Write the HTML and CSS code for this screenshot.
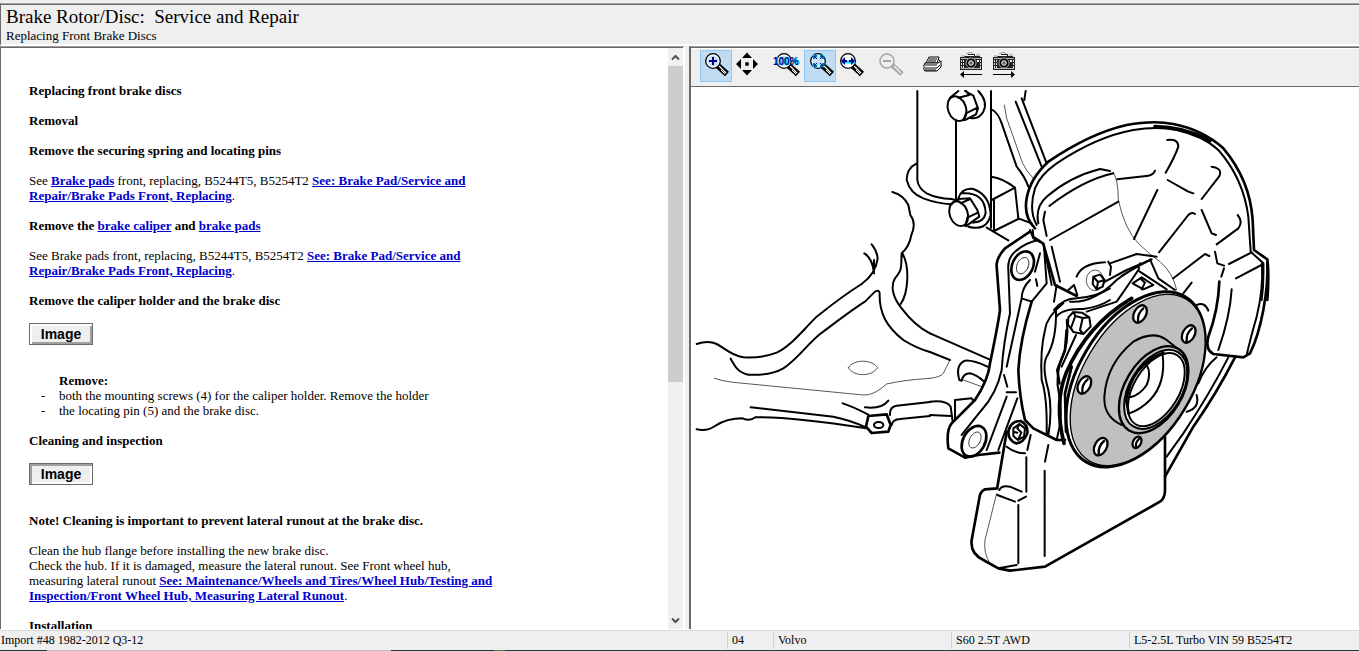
FILE: index.html
```html
<!DOCTYPE html>
<html lang="en">
<head>
<meta charset="utf-8">
<title>Brake Rotor/Disc: Service and Repair</title>
<link rel="stylesheet" href="styles.css">
</head>
<body>
<div class="app">
  <header class="header">
    <h1 class="title">Brake Rotor/Disc:  Service and Repair</h1>
    <p class="subtitle">Replacing Front Brake Discs</p>
  </header>
  <main class="panes">
    <section class="doc-pane">
      <article class="doc">
        <h2>Replacing front brake discs</h2>
        <h2>Removal</h2>
        <h2>Remove the securing spring and locating pins</h2>
        <p>See <a href="#">Brake pads</a> front, replacing, B5244T5, B5254T2 <a href="#">See: Brake Pad/Service and Repair/Brake Pads Front, Replacing</a>.</p>
        <h2>Remove the <a href="#">brake caliper</a> and <a href="#">brake pads</a></h2>
        <p>See Brake pads front, replacing, B5244T5, B5254T2 <a href="#">See: Brake Pad/Service and Repair/Brake Pads Front, Replacing</a>.</p>
        <h2>Remove the caliper holder and the brake disc</h2>
        <button class="image-button" type="button">Image</button>
        <div class="steps">
          <h3>Remove:</h3>
          <ul>
            <li>both the mounting screws (4) for the caliper holder. Remove the holder</li>
            <li>the locating pin (5) and the brake disc.</li>
          </ul>
        </div>
        <h2>Cleaning and inspection</h2>
        <button class="image-button pressed" type="button">Image</button>
        <h2>Note! Cleaning is important to prevent lateral runout at the brake disc.</h2>
        <p>Clean the hub flange before installing the new brake disc.<br>Check the hub. If it is damaged, measure the lateral runout. See Front wheel hub, measuring lateral runout <a href="#">See: Maintenance/Wheels and Tires/Wheel Hub/Testing and Inspection/Front Wheel Hub, Measuring Lateral Runout</a>.</p>
        <h2>Installation</h2>
      </article>
      <div class="scrollbar">
        <button class="scroll-button" type="button" aria-label="Scroll up"><svg width="9" height="7" viewBox="0 0 9 7"><path d="M1 5.500 4.500 2 8 5.500"/></svg></button>
        <div class="track"><div class="thumb"></div></div>
        <button class="scroll-button" type="button" aria-label="Scroll down"><svg width="9" height="7" viewBox="0 0 9 7"><path d="M1 1.500 4.500 5 8 1.500"/></svg></button>
      </div>
    </section>
    <section class="image-pane">
      <svg class="defs" width="0" height="0" aria-hidden="true">
        <symbol id="lens" viewBox="0 0 32 32">
          <path d="M17 15 27 24" stroke="#000" stroke-width="6"/>
          <path d="M19 16 26 23" stroke="#fff" stroke-width="1.200"/>
          <path d="M21 20 25 24" stroke="#fff" stroke-width="1"/>
          <circle cx="13" cy="11" r="7.300" fill="#fff" stroke="#000" stroke-width="1.300"/>
          <circle cx="13" cy="11" r="5.600" fill="#c6e2f4"/>
        </symbol>
        <symbol id="camera" viewBox="0 0 32 32">
          <path d="M4 7H8V6H12V4H19V6H24V7H26V20H4Z" fill="#222"/>
          <path d="M5 6H9M20 5H24M10 4 15 2 17 4" stroke="#999" stroke-width="1" fill="none"/>
          <path d="M5 8.500H25M5 18.500H25" stroke="#b5b5b5" stroke-width="1"/>
          <path d="M5.500 10V18M7.500 10V18M24.500 10V18" stroke="#ddd" stroke-width="1" stroke-dasharray="2 1"/>
          <circle cx="15" cy="13" r="5" fill="#000" stroke="#aaa" stroke-width="1"/>
          <circle cx="15" cy="13" r="2.300" fill="#666" stroke="#fff" stroke-width="1"/>
          <path d="M12 5.500H18" stroke="#fff" stroke-width="1"/>
          <path d="M21 10H23V12H21Z" fill="#fff"/>
        </symbol>
      </svg>
      <div class="toolbar">
        <button class="tool active" type="button" aria-label="Zoom in"><svg viewBox="0 0 32 32"><use href="#lens"/><path d="M9 11H17M13 7V15" stroke="#00008b" stroke-width="2"/></svg></button>
        <button class="tool" type="button" aria-label="Pan"><svg viewBox="0 0 32 32"><path d="M11 7H19L22 10V18L19 21H11L8 18V10Z" fill="#fff"/><path d="M11 8H19L21 10V18L19 20H11L9 18V10Z" fill="#efefef"/><path d="M15 2.500 20 8H10ZM15 25.500 10 20H20ZM4 14 9 9V19ZM26 14 21 19V9Z"/><circle cx="15" cy="14" r="2"/></svg></button>
        <button class="tool group" type="button" aria-label="Zoom to 100%"><svg viewBox="0 0 32 32"><use href="#lens" x="-1"/><text class="full cyan" x="2" y="15">100%</text><text class="full" x="1" y="15">100%</text></svg></button>
        <button class="tool active" type="button" aria-label="Fit window"><svg viewBox="0 0 32 32"><use href="#lens" x="1"/><path d="M10 9V6H13M16 6H19V9M19 13V16H16M13 16H10V13" fill="none" stroke="#00e5ff" stroke-width="2.600"/><path d="M10 9V6H13M10 6 13 9M16 6H19V9M19 6 16 9M19 13V16H16M19 16 16 13M13 16H10V13M10 16 13 13" fill="none" stroke="#00008b"/></svg></button>
        <button class="tool" type="button" aria-label="Fit width"><svg viewBox="0 0 32 32"><use href="#lens" x="-1"/><circle cx="12" cy="11" r="5.600" fill="#fff"/><path d="M6 12H19" stroke="#00e5ff" stroke-width="3"/><path d="M5 11 9 7V10H11V12H9V15ZM19 11 15 7V10H13V12H15V15Z" fill="#00008b"/></svg></button>
        <button class="tool group" type="button" aria-label="Zoom out" disabled><svg viewBox="0 0 32 32"><g stroke="#a5a5a5" fill="none"><path d="M16 15 26 24" stroke-width="5"/><circle cx="11" cy="11" r="7" fill="#efefef" stroke-width="1.500"/><path d="M7 11H15" stroke-width="2"/></g><path d="M18 16 25 23" stroke="#eee" stroke-width="1.500"/></svg></button>
        <button class="tool group" type="button" aria-label="Print"><svg viewBox="0 0 32 32"><path d="M13 7H23L21 13H10Z" fill="#fff" stroke="#000"/><path d="M13 9H21M12 11H20" stroke="#000"/><path d="M9 13H22L25 11V17L21 21H9L8 20V15Z" fill="#fff" stroke="#000"/><path d="M9 15H21M9 18H21L24 15M9 20H20M22 9 24 11" stroke="#000" fill="none"/></svg></button>
        <button class="tool group" type="button" aria-label="Previous image"><svg viewBox="0 0 32 32"><use href="#camera"/><path d="M26 24H8V21L4 24.500 8 28V25H26Z"/></svg></button>
        <button class="tool" type="button" aria-label="Next image"><svg viewBox="0 0 32 32"><use href="#camera" x="1"/><path d="M5 24H23V21L27 24.500 23 28V25H5Z"/></svg></button>
      </div>
      <div class="viewer">
        <svg class="drawing" viewBox="691 87 668 541" preserveAspectRatio="xMinYMin meet" role="img" aria-label="Front hub, brake disc shield and suspension">
          <!-- Subframe and control arm -->
          <g transform="translate(690 180) scale(.33333)">
            <path d="M20 492Q55 480 80 492C110 508 120 525 160 532C200 534 230 530 260 518C300 500 330 460 380 410C430 370 470 340 515 312C545 290 560 260 563 235Q560 210 545 193M523 220Q548 235 552 280M552 240V275M122 536C135 560 145 578 175 584C215 586 250 582 280 565C320 540 350 495 390 462C440 425 485 390 525 365Q545 345 555 335Q568 328 569 340C567 400 590 440 640 480Q680 505 720 516M607 36Q640 45 655 75L661 105Q680 130 664 165Q658 200 635 220C632 260 640 265 615 295C600 320 610 355 635 385C665 425 690 445 720 460M637 220C660 260 655 340 632 372M182 682 430 710Q480 720 528 742M20 748Q50 755 75 738Q110 715 158 715Q180 725 196 712Q300 710 528 745M458 670Q490 680 535 704M525 682Q575 688 595 662M600 705Q598 680 620 677L720 666M605 735Q608 718 630 717L720 708"/>
            <path class="bold" d="M535 708 590 703 602 735 595 755 545 759 528 740Z"/>
            <ellipse cx="566" cy="735" rx="14" ry="9"/>
            <path class="thin" d="M73 595Q95 603 130 607L520 645Q550 648 590 612Q640 600 720 595M475 563C490 537 546 537 563 563C546 591 490 591 475 563"/>
          </g>
          <!-- Spring strut and its bolts -->
          <g transform="translate(890 85) scale(.33333)">
            <path d="M82 18V285Q85 310 110 325Q140 340 185 342L205 348M80 235Q50 250 50 285Q60 325 100 340Q140 355 185 358M198 105V340M303 18V345M303 345V428M303 275Q340 280 375 308L385 400 425 415M305 345 375 308M312 345V438L385 402M290 428 355 466M308 75Q325 85 335 115L380 245Q405 275 415 305M377 50 455 245M395 40 470 235M407 18 403 45"/>
            <path d="M265 18Q295 50 280 80Q265 105 240 98M180 38 205 18M225 18 250 32 264 70 258 88 225 105M205 38 238 30M228 85 262 68M228 85 220 106M238 30 228 18"/>
            <ellipse cx="201" cy="71" rx="27" ry="38" transform="rotate(-20 201 71)"/>
            <path d="M205 340Q215 308 250 312Q300 330 302 390Q290 440 235 425M215 325Q285 320 287 385Q280 415 245 412M190 352 205 342 240 340 262 375 268 395 230 422M212 355 240 342M232 398 265 382M232 398 226 424"/>
            <ellipse cx="206" cy="386" rx="27" ry="38" transform="rotate(-20 206 386)"/>
            <path class="thin" d="M343 60 350 100 398 235Q410 260 430 280"/>
          </g>
          <!-- Upper dust shield -->
          <g transform="translate(1010 100) scale(.33333)">
            <path class="bold" d="M75 385Q40 350 50 295Q60 235 115 185Q240 100 350 75Q430 60 490 72Q580 90 640 145Q720 240 728 360L732 450 772 478Q778 520 772 600"/>
            <path d="M80 375Q55 330 75 265Q90 225 140 190Q260 110 370 90Q440 78 500 90Q580 108 625 150Q700 235 715 350L722 455 760 490Q762 550 755 600"/>
            <path class="heavy" d="M435 80Q520 80 600 122"/>
            <path d="M85 370Q75 320 110 290Q180 230 270 207L300 213M118 318Q220 240 310 220M105 335 100 360 110 408M120 420 325 305M125 440 150 545M68 390 70 410 100 430 125 555M322 238 415 227Q430 225 435 212M472 120Q505 115 505 140Q495 170 467 218M473 240 535 275 550 280M605 200Q640 205 627 230L575 297M442 270 372 417M575 330 605 400 618 405M555 342Q545 335 535 345L447 457M683 345Q700 365 685 385L620 433M598 468 585 462 490 535M615 455 622 490 642 497M657 492 725 457M678 535 760 492M642 505 634 530M545 548 520 580"/>
            <path d="M200 530Q215 490 285 487M295 485 303 500 300 525M300 490 380 462 440 470M285 545 350 510 425 478"/>
            <path d="M250 530 270 524 284 540 278 560 260 568 248 552ZM250 530 264 546 284 540M264 546 260 568"/>
            <path class="thin" d="M310 218Q325 240 325 300Q345 390 385 430Q420 465 450 485Q490 520 500 570"/>
            <ellipse class="thin" cx="255" cy="541" rx="26" ry="31"/>
          </g>
          <!-- Lower dust shield -->
          <g transform="translate(940 400) scale(.33333)">
            <path class="bold" d="M200 95 172 262M172 265 135 268Q120 275 118 295L95 420Q90 460 130 480L175 505 210 512 315 500 660 305Q675 295 675 270V110"/>
            <path d="M178 270Q185 255 210 260L245 275M172 285 225 305M235 302 258 290M259 172V275M235 315V490M175 505 230 495M314 212V468M325 135 315 185M200 140Q225 160 255 160M272 105 262 150"/>
            <path class="thin" d="M170 280 135 420Q130 460 150 490"/>
          </g>
          <!-- Knuckle and caliper carrier -->
          <g transform="translate(930 230) scale(.33333)">
            <path d="M0 310 178 388M0 366 60 390M172 410Q130 390 105 392Q75 405 88 450L95 452Q100 430 120 430Q140 435 163 455M75 570V510L125 505 130 512M0 515Q50 510 62 530L68 575M0 555 62 558"/>
            <path class="thin" d="M60 390 40 430Q30 442 0 445M95 448 155 470"/>
            <path class="bold" d="M300 5 225 55Q198 85 200 110L210 240Q205 280 180 400Q175 450 135 510L65 580Q48 600 55 655L105 683 145 675 208 668"/>
            <path d="M325 30Q280 40 250 70Q232 90 235 120L240 250Q220 340 215 420Q200 490 155 540L95 615M222 435 232 470M230 487H258M262 505 205 660M230 500 170 660"/>
            <ellipse class="bold" cx="278" cy="107" rx="31" ry="45" transform="rotate(25 278 107)"/>
            <ellipse class="thin" cx="278" cy="107" rx="17" ry="26" transform="rotate(25 278 107)"/>
            <ellipse class="bold" cx="132" cy="634" rx="33" ry="49" transform="rotate(28 132 634)"/>
            <ellipse class="thin" cx="135" cy="630" rx="16" ry="26" transform="rotate(28 135 630)"/>
            <path d="M300 150Q275 175 275 205L305 215 350 160 342 50M275 205 230 410M318 148 322 168M330 70 315 125M300 0 310 25 340 42M380 165 372 215M415 180 432 165 442 195"/>
            <path class="bold" d="M340 42 375 165 440 198M305 215Q270 330 265 420Q268 500 285 570L310 595 380 630 405 630"/>
            <path d="M372 240Q400 205 440 205Q500 200 540 175M400 220Q350 260 345 300Q330 360 335 450Q352 500 350 610M378 240Q380 330 350 380Q335 410 355 480Q368 540 355 615M378 262Q395 235 460 237Q510 230 540 210M410 270Q420 340 390 400Q378 450 385 480Q402 550 380 630M438 315 395 410"/>
            <path d="M415 262 430 246 456 248 478 262 482 290 460 312 430 306 414 284ZM430 246 436 258 423 294M436 258 458 264 478 262M458 264 450 300M423 294 430 306M450 300 460 312"/>
            <path class="bold" d="M236 600Q245 572 272 573Q295 585 292 610Q280 640 258 640Q232 630 236 600Z"/>
            <path d="M250 595 268 582 285 595 282 620 264 630 250 618ZM262 595 274 608 264 630M262 595 268 582M250 605 262 608"/>
          </g>
          <!-- Shield edge, hub flange and bore -->
          <g transform="translate(1050 250) scale(.33333)">
            <path class="bold" d="M652 38Q655 100 640 180Q625 260 600 310L580 322 490 312Q465 300 475 260Q505 180 508 95"/>
            <path d="M636 40Q640 120 620 200Q600 270 590 315M545 118Q540 200 505 300M535 322Q480 430 400 550L350 620M500 322Q465 350 445 400M440 435Q450 475 410 485M440 165Q465 155 475 182"/>
            <path class="bold" d="M555 322Q500 430 430 530L345 680"/>
            <path d="M60 155C120 160 170 120 200 90Q230 65 300 30M110 185 200 155Q235 105 265 60M270 40 265 62 350 118M300 28 325 85 375 120M248 100 275 82 310 105 280 118ZM270 85 285 98 275 118"/>
            <path class="heavy" d="M245 145Q110 225 48 370Q12 460 42 580"/>
            <path class="bold" d="M50 240 45 300 22 360 28 400M65 350 45 430 48 545"/>
            <ellipse class="disc-rim" cx="257" cy="388" rx="171" ry="289" transform="rotate(31 257 388)"/>
            <ellipse class="disc-face" cx="263" cy="390" rx="164" ry="283" transform="rotate(31 263 390)"/>
            <path d="M215 525Q160 500 163 440Q170 340 250 275Q310 240 350 270L385 298"/>
            <ellipse class="disc-boss" cx="311" cy="419" rx="86" ry="143" transform="rotate(31 311 419)"/>
            <ellipse class="disc-bore" cx="317" cy="418" rx="78" ry="130" transform="rotate(31 317 418)"/>
            <ellipse class="disc-bore" cx="319" cy="419" rx="68" ry="121" transform="rotate(31 319 419)"/>
            <path class="bold" d="M340 308Q245 345 229 450L236 492"/>
            <path d="M338 315Q348 400 300 450Q270 480 238 490M290 345Q305 370 290 405Q270 435 240 442"/>
            <g class="hole">
              <ellipse cx="270" cy="192" rx="18" ry="28" transform="rotate(28 270 192)"/>
              <ellipse cx="416" cy="252" rx="18" ry="28" transform="rotate(28 416 252)"/>
              <ellipse cx="103" cy="405" rx="18" ry="28" transform="rotate(28 103 405)"/>
              <ellipse cx="152" cy="590" rx="18" ry="28" transform="rotate(28 152 590)"/>
              <ellipse cx="261" cy="577" rx="12" ry="18" transform="rotate(28 261 577)"/>
              <path d="M280 175Q262 190 264 214M426 235Q408 250 410 274M113 388Q95 403 97 427M162 573Q144 588 146 612M267 567Q256 577 258 589"/>
            </g>
          </g>
        </svg>
      </div>
    </section>
  </main>
  <footer class="statusbar">
    <span>Import #48 1982-2012 Q3-12</span>
    <span>04</span>
    <span>Volvo</span>
    <span>S60 2.5T AWD</span>
    <span>L5-2.5L Turbo VIN 59 B5254T2</span>
  </footer>
</div>
</body>
</html>
```
FILE: styles.css
```css
* { box-sizing: border-box; }

body {
  margin: 0;
  background: #efefef;
  color: #000;
  font: 13px/15px "Liberation Serif", "Times New Roman", serif;
}

h1, h2, h3, p, ul { margin: 0; padding: 0; }

button { font: inherit; color: inherit; padding: 0; margin: 0; border: 0; background: none; }

.app {
  display: flex;
  flex-direction: column;
  height: 100vh;
  padding-top: 3px;
}

.header {
  border-top: 1px solid #a0a0a0;
  border-left: 1px solid #696969;
  border-bottom: 2px solid #fff;
  box-shadow: inset 0 1px #696969;
  padding: 2px 5px 0;
}

.title { font-size: 19px; line-height: 22px; font-weight: normal; white-space: pre; }
.subtitle { line-height: 16px; }

.panes {
  flex: 1;
  min-height: 0;
  display: grid;
  grid-template-columns: 685fr 670fr;
  gap: 4px;
  border-bottom: 1px solid #fff;
}

.doc-pane, .image-pane {
  min-width: 0;
  min-height: 0;
  display: flex;
  border-top: 1px solid #a0a0a0;
  box-shadow: inset 0 1px #696969;
  padding-top: 1px;
  background: #fff;
}

.doc-pane { border-left: 1px solid #696969; border-right: 2px solid #fff; }
.image-pane { flex-direction: column; border-left: 2px solid #696969; }

.doc { flex: 1; min-width: 0; overflow: hidden; padding: 35px 28px 0; }
.doc h2, .doc h3 { font: inherit; font-weight: bold; }
.doc > * { max-width: 470px; margin-bottom: 15px; }
.doc a { color: #0000cd; font-weight: bold; }

.steps { padding-left: 30px; }
.steps ul { list-style: none; }
.steps li::before { content: "-"; display: inline-block; width: 18px; margin-left: -18px; }

.image-button {
  display: block;
  width: 64px;
  height: 22px;
  border: 1px solid #696969;
  background: #efefef;
  box-shadow: inset 2px 2px #fff, inset -2px -2px #a0a0a0;
  font: bold 14px/20px "Liberation Sans", Arial, sans-serif;
}
.doc > .image-button { margin-bottom: 28px; }
.image-button.pressed { box-shadow: inset 2px 2px #a0a0a0, inset -2px -2px #fff; }

.scrollbar { width: 15px; display: flex; flex-direction: column; background: #f0f0f0; }
.scroll-button { height: 18px; display: grid; place-items: center; }
.scroll-button path { fill: none; stroke: #505050; stroke-width: 2; }
.track { flex: 1; }
.thumb { height: 58%; background: #cdcdcd; }

.toolbar {
  display: flex;
  height: 39px;
  padding: 1px 9px;
  background: #efefef;
  border-top: 1px solid #fff;
  border-bottom: 1px solid #696969;
}
.tool { width: 32px; height: 32px; display: block; }
.tool svg { display: block; width: 32px; height: 32px; }
.tool.active { background: #c0dcf3; box-shadow: inset 0 0 0 1px #90c8f6; }
.tool.group { margin-left: 8px; }
.full { font: bold 10px "Liberation Sans", Arial, sans-serif; fill: #00008b; }
.full.cyan { fill: #00e5ff; }
.defs { position: absolute; }

.viewer { flex: 1; min-height: 0; overflow: hidden; }
.drawing { display: block; width: 100%; height: 100%; }
.drawing g { fill: none; stroke: #000; stroke-width: 6; stroke-linejoin: round; stroke-linecap: round; }
.drawing .bold { stroke-width: 8; }
.drawing .heavy { stroke-width: 11; }
.drawing .thin { stroke-width: 2; }
.drawing .disc-rim { fill: #fff; stroke-width: 9; }
.drawing .disc-face { fill: #c0c0c0; stroke-width: 4; }
.drawing .disc-boss { fill: #c0c0c0; stroke-width: 7; }
.drawing .disc-bore { fill: #fff; }
.drawing .hole { fill: #fff; stroke-width: 7; }
.drawing .hole path { fill: none; }

.statusbar {
  display: grid;
  grid-template-columns: 727fr 46fr 178fr 178fr 230fr;
  height: 21px;
  border-top: 1px solid #d7d7d7;
  background: linear-gradient(90deg, #1e3a47 47px, #c0c0c0 47px 391px, #1e3a47 391px 494px, #3c7f47 494px 505px, #1e3a47 505px) bottom / 100% 1px no-repeat #efefef;
  font-size: 12px;
}
.statusbar span { margin: 1px 0 2px; padding: 1px 4px; border-left: 1px solid #d0d0d0; white-space: nowrap; }
.statusbar span:first-child { border: 0; padding-left: 1px; }
```
